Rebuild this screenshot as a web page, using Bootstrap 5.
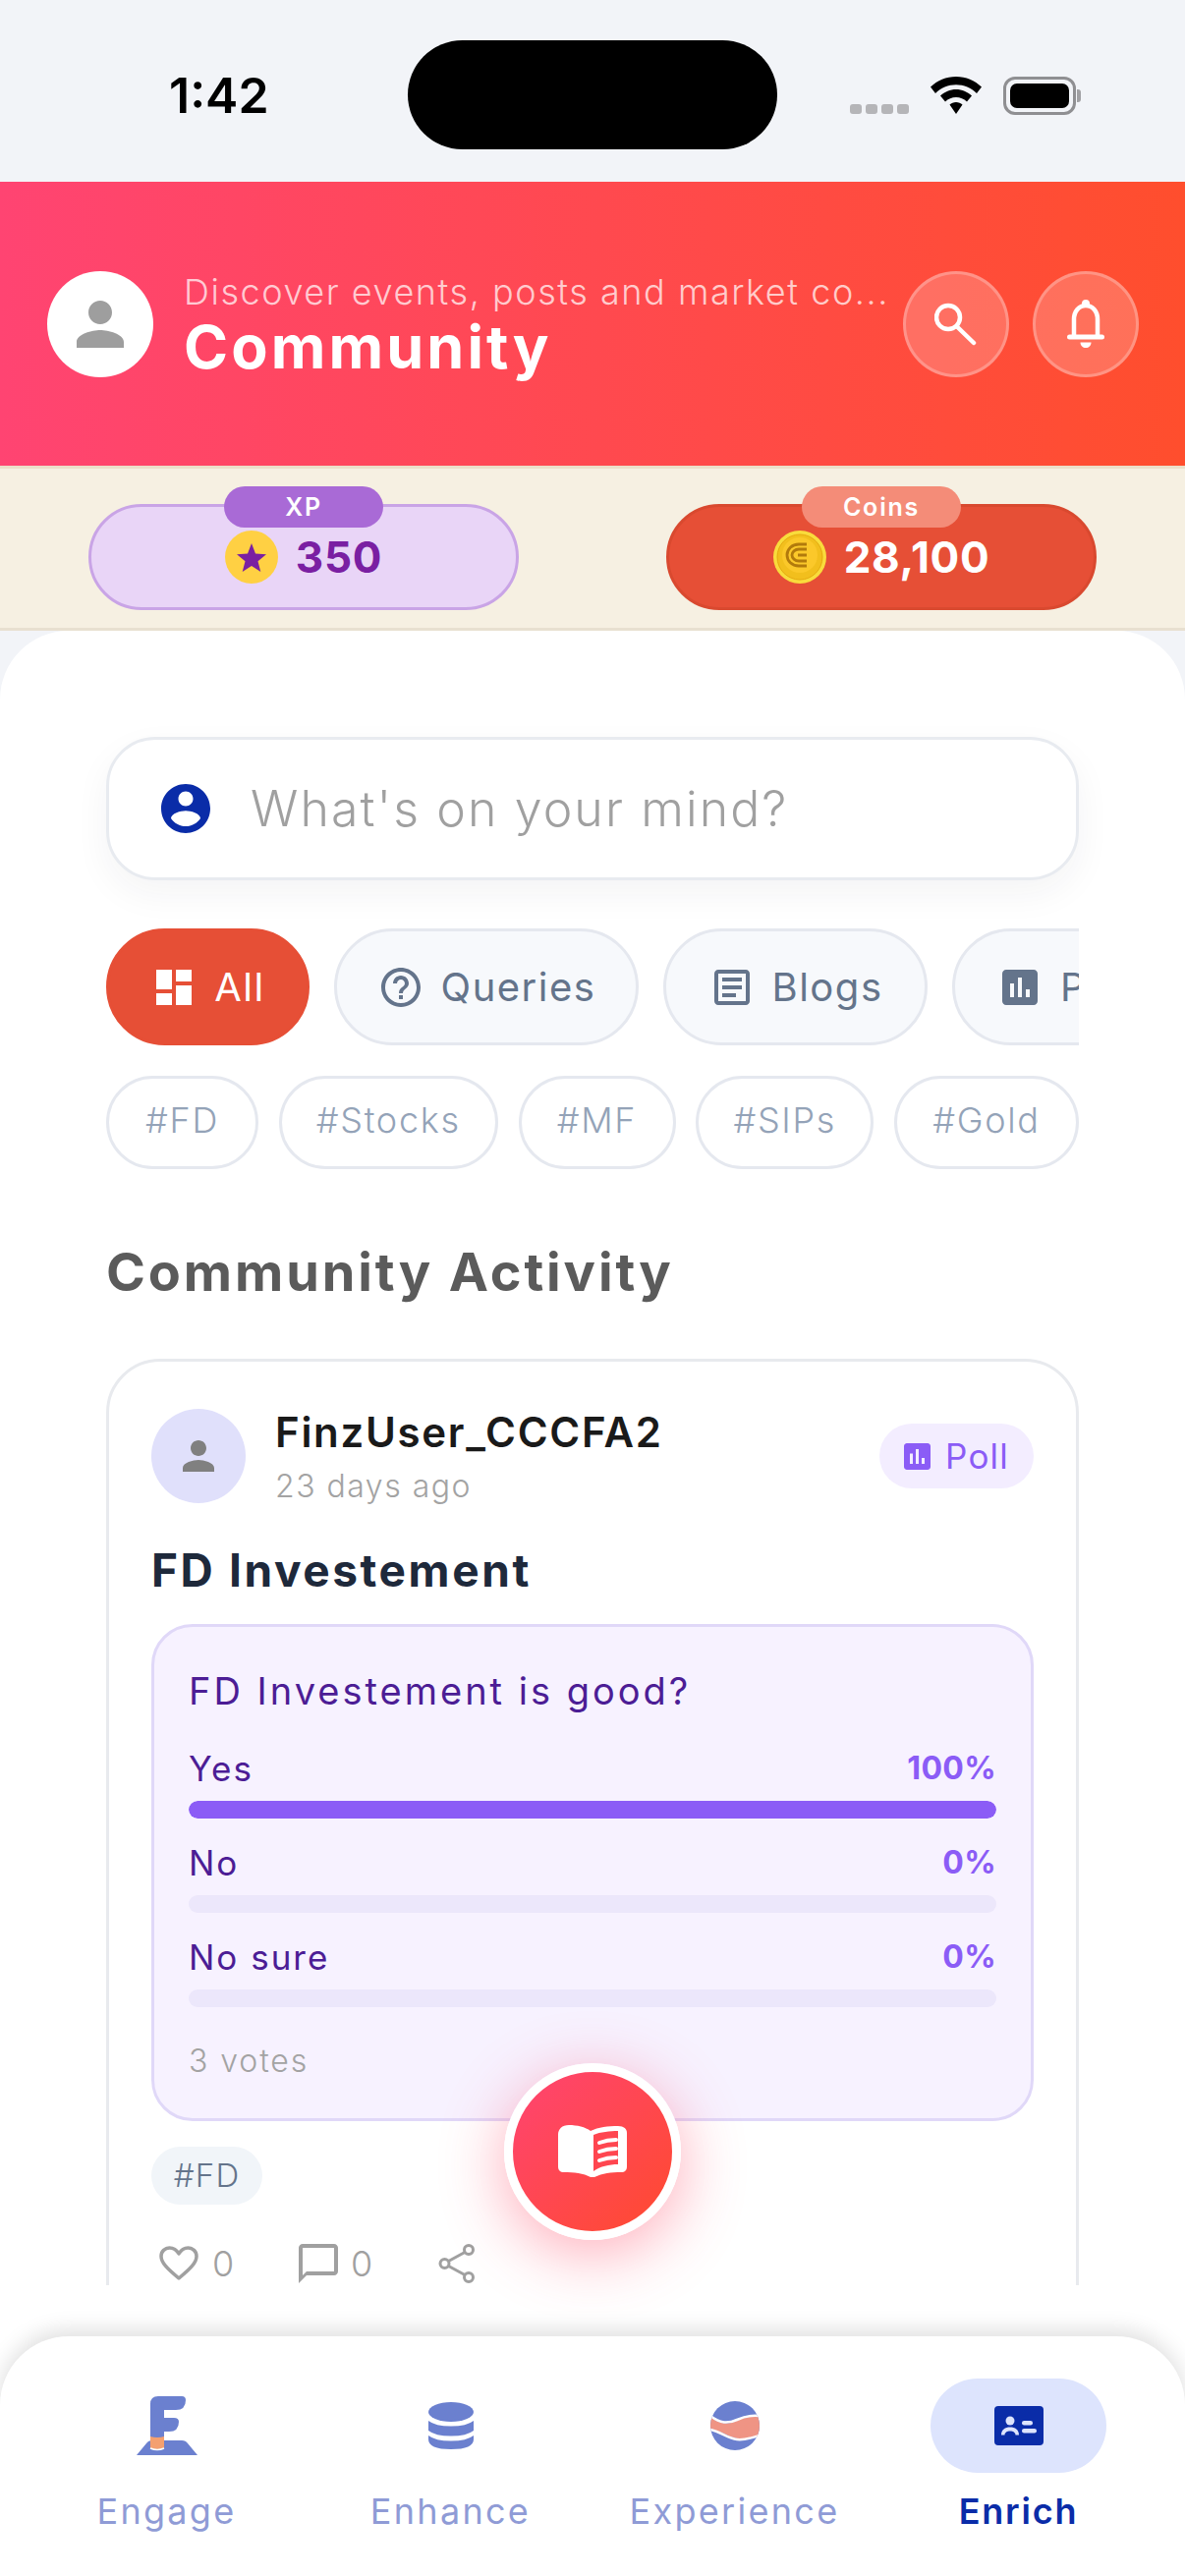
<!DOCTYPE html>
<html lang="en">
<head>
<meta charset="utf-8">
<title>Community</title>
<link href="https://cdn.jsdelivr.net/npm/bootstrap@5.3.0/dist/css/bootstrap.min.css" rel="stylesheet">
<style>
html,body{height:100%}
body{width:1206px;height:2622px;overflow:hidden;background:#f2f4f8;font-family:"Inter","Liberation Sans",sans-serif;position:relative;color:#1a1a1a}
.ph-status{height:185px;padding-top:9px;flex:none}
.ph-left{width:415px;padding-left:172px;font-size:50px;font-weight:600;letter-spacing:0;color:#000;line-height:1}
.ph-island{width:376px;height:111px;background:#000;border-radius:56px;margin-top:-1px}
.ph-right{margin-left:74px;gap:22px}
.ph-dots{gap:4px;margin-top:28px}
.ph-dots i{display:block;width:12px;height:10px;border-radius:3px;background:#b5b5b8}
.ph-batt{width:74px;height:39px;border:3px solid #8f8f92;border-radius:12px;padding:4px;position:relative}
.ph-batt i{display:block;height:100%;background:#000;border-radius:7px}
.ph-batt::after{content:"";position:absolute;right:-8px;top:10px;width:4px;height:13px;background:#a0a0a3;border-radius:0 3px 3px 0}
.hero{height:289px;padding:0 49px 0 48px;background:linear-gradient(90deg,#ff4472,#ff4e2d);flex:none}
.hero-av{width:108px;height:108px;background:#fff;flex:none}
.hero-txt{margin-left:31px;width:718px;flex:none;padding-top:4px}
.hero-sub{font-size:36px;line-height:44px;font-weight:300;color:rgba(255,255,255,.72);letter-spacing:1.55px;white-space:nowrap;margin-top:-2px}
.hero-title{font-size:61px;line-height:66px;font-weight:700;color:#fff;letter-spacing:3.1px;margin-top:1px}
.hero-btn{width:108px;height:108px;background:rgba(255,255,255,.2);border:3px solid rgba(255,255,255,.25);flex:none}
.hero-gap{margin-left:14px}
.hero-gap2{margin-left:24px}
.stats{height:168px;flex:none;background:#f6f0e2;border-top:3px solid #ecdfc9;border-bottom:3px solid #e8e0d0;padding:36px 90px 0}
.stat-pill{width:438px;height:108px;gap:18px}
.stat-xp{background:#e9d5f7;border:3px solid #c9a4e6}
.stat-coin{background:#e64f36;border:3px solid #d9492f}
.stat-lab{position:absolute;top:-21px;left:50%;transform:translateX(-50%);width:162px;height:42px;border-radius:21px;color:#fff;font-size:25px;font-weight:600;line-height:42px;text-align:center;letter-spacing:1.8px}
.lab-xp{background:#a96ad6}
.lab-coin{background:#f48c78}
.stat-num{font-size:44px;font-weight:700;line-height:54px;letter-spacing:.7px}
.num-xp{color:#7a1fa2}
.num-coin{color:#fff}
.sheet{flex:1;min-height:0;background:#fff;border-radius:70px 70px 0 0;overflow:hidden}
.feed{height:1684px;overflow:hidden;padding:108px 108px 0;flex:none}
.composer{height:146px;border:3px solid #e8ebf0;border-radius:50px;padding-left:48px;background:#fff;box-shadow:0 14px 36px rgba(30,41,59,.05);gap:36px}
.composer span{font-size:50px;font-weight:300;color:#a0a0a0;letter-spacing:2.1px}
.chips{margin-top:49px;gap:25px;overflow:hidden;height:119px}
.chip{height:119px;flex:none;border:3px solid #e5e8ef;background:#f7f9fc;color:#64748b;font-size:40px;gap:17px;letter-spacing:1.5px}
.chip-on{background:#e64f36;border-color:#e64f36;color:#fff}
.w-all{width:207px}.w-q{width:310px}.w-b{width:269px}.w-p{width:260px;padding-left:42px}
.tags{margin-top:31px}
.tag-pill{height:95px;border:3px solid #e5e8ef;color:#94a3b8;font-size:36px;font-weight:300;letter-spacing:1.7px;background:#fff;padding-bottom:5px}
.w-t1{width:155px}.w-t2{width:223px}.w-t3{width:160px}.w-t4{width:181px}.w-t5{width:188px}
.heading{margin:75px 0 58px;font-size:54px;line-height:60px;font-weight:700;color:#5b5b5b;letter-spacing:2.9px}
.post{border:3px solid #e8eaee;border-radius:55px;padding:48px 43px 120px 43px;background:#fff}
.post-av{width:96px;height:96px;background:#e0e0fb;flex:none}
.post-who{margin-left:30px}
.post-name{font-size:42px;line-height:48px;font-weight:600;color:#1a1a1a;letter-spacing:1.7px}
.post-time{font-size:32px;line-height:42px;margin-top:10px;color:#a3a3a3;font-weight:300;letter-spacing:1.5px}
.post-badge{width:157px;height:66px;margin-top:15px;background:#f3edff;color:#8b5cf6;font-size:35px;gap:15px;letter-spacing:1.2px}
.post-title{margin:36px 0 27px;font-size:46px;line-height:56px;font-weight:700;color:#1e293b;letter-spacing:2.6px}
.poll{border:3px solid #e0d8f8;background:#f7f2ff;border-radius:42px;padding:40px 35px 38px}
.poll-q{font-size:38px;line-height:50px;color:#4c1d95;letter-spacing:3px}
.poll-row{margin-top:25px;line-height:40px;font-size:35px;color:#4c1d95;letter-spacing:2px;font-weight:400}
.poll-row.first{margin-top:34px}
.poll-row b{color:#8b5cf6;font-weight:700;font-size:32px;letter-spacing:.3px}
.poll-bar{height:18px;margin-top:13px;background:#ece7fb;border-radius:9px}
.poll-bar .progress-bar{background:#8b5cf6;border-radius:9px}
.poll-votes{margin-top:35px;line-height:40px;font-size:32px;font-weight:300;color:#a3a3a3;letter-spacing:1.9px}
.post-tag{margin-top:26px;width:113px;height:59px;background:#f1f5f9;color:#64748b;font-size:33px;font-weight:300;letter-spacing:1.2px}
.acts{margin-top:40px;height:40px;color:#a0a0a0;font-size:36px;font-weight:300;line-height:36px}
.act1{width:141px;gap:14px}.act2{width:143px;gap:12px}
.fab{position:absolute;left:513px;top:2100px;width:180px;height:180px;border:9px solid #fff;background:linear-gradient(135deg,#ff4472,#ff4a2e);box-shadow:0 14px 64px rgba(255,60,90,.42)}
.botnav{height:244px;flex:none;background:#fff;border-radius:70px 70px 0 0;box-shadow:0 -6px 22px rgba(0,0,0,.13);padding:43px 25px 0;margin-top:52px}
.nav-col{width:289.25px}
.nav-slot{width:179px;height:96px}
.nav-on{background:#dde4fd}
.nav-lab{margin-top:17px;font-size:36px;line-height:44px;color:#8f9bd6;letter-spacing:2.3px}
.nav-lab.on{color:#0a2ca8;font-weight:600;letter-spacing:1.8px}
</style>
</head>
<body class="d-flex flex-column">
<div class="ph-status d-flex align-items-center">
  <div class="ph-left">1:42</div>
  <div class="ph-island"></div>
  <div class="ph-right d-flex align-items-center">
    <div class="ph-dots d-flex"><i></i><i></i><i></i><i></i></div>
    <svg width="52" height="38" viewBox="0 0 52 38" aria-hidden="true"><path d="M26 0C16 0 7 4 0 10.500L5 17C10.500 11.500 18 8.200 26 8.200S41.500 11.500 47 17L52 10.500C45 4 36 0 26 0Z"/><path d="M26 13C20 13 14.500 15.500 10 19.500L15 25.500C18 22.700 21.800 21 26 21S34 22.700 37 25.500L42 19.500C37.500 15.500 32 13 26 13Z"/><path d="M26 26C23.500 26 21.200 27 19.500 28.500L26 38L32.500 28.500C30.800 27 28.500 26 26 26Z"/></svg>
    <div class="ph-batt"><i></i></div>
  </div>
</div>

<header class="hero d-flex align-items-center">
  <div class="hero-av rounded-circle d-flex align-items-center justify-content-center">
    <svg width="72" height="72" viewBox="0 0 24 24" fill="#9e9e9e" aria-hidden="true"><path d="M12 12c2.210 0 4-1.790 4-4s-1.790-4-4-4-4 1.790-4 4 1.790 4 4 4zm0 2c-2.670 0-8 1.340-8 4v2h16v-2c0-2.660-5.330-4-8-4z"/></svg>
  </div>
  <div class="hero-txt">
    <div class="hero-sub">Discover events, posts and market co...</div>
    <div class="hero-title">Community</div>
  </div>
  <div class="hero-btn hero-gap rounded-circle d-flex align-items-center justify-content-center">
    <svg width="44" height="44" viewBox="0 0 44 44" fill="none" stroke="#fff" stroke-width="4.500" aria-hidden="true"><circle cx="14" cy="15" r="12"/><path d="M23.500 25L40 41" stroke-linecap="round"/></svg>
  </div>
  <div class="hero-btn hero-gap2 rounded-circle d-flex align-items-center justify-content-center">
    <svg width="40" height="52" viewBox="0 0 40 52" fill="none" aria-hidden="true"><path d="M8 38V21C8 13 13 7 20 7S32 13 32 21V38" stroke="#fff" stroke-width="4.500"/><path d="M3.500 39H36.500" stroke="#fff" stroke-width="5" stroke-linecap="round"/><circle cx="20" cy="5" r="4" fill="#fff"/><path d="M14.500 44.500H25.500C25.500 48 23 50 20 50S14.500 48 14.500 44.500Z" fill="#fff"/></svg>
  </div>
</header>

<section class="stats d-flex justify-content-between">
  <div class="stat-pill stat-xp rounded-pill position-relative d-flex align-items-center justify-content-center">
    <div class="stat-lab lab-xp">XP</div>
    <svg width="54" height="54" viewBox="0 0 54 54" aria-hidden="true"><circle cx="27" cy="27" r="27" fill="#ffd043"/><path d="M27 13L31 23.500L42 24.200L33.500 31.200L36.300 42L27 36L17.700 42L20.500 31.200L12 24.200L23 23.500Z" fill="#7a1fa2"/></svg>
    <span class="stat-num num-xp">350</span>
  </div>
  <div class="stat-pill stat-coin rounded-pill position-relative d-flex align-items-center justify-content-center">
    <div class="stat-lab lab-coin">Coins</div>
    <svg width="54" height="54" viewBox="0 0 54 54" fill="none" aria-hidden="true"><circle cx="27" cy="27" r="27" fill="#f9dc3c"/><circle cx="27" cy="27" r="23" fill="#f2bf1d" stroke="#e5a90f"/><circle cx="27" cy="25" r="18" fill="#fbc82a"/><path d="M34 14H26C19 14 14 19 14 25S19 36 26 36H34M34 19H26C22 19 19 22 19 25S22 31 26 31H34M34 25H25" stroke="#b27a0c" stroke-width="2.800"/></svg>
    <span class="stat-num num-coin">28,100</span>
  </div>
</section>

<main class="sheet d-flex flex-column">
  <div class="feed">
    <div class="composer d-flex align-items-center">
      <svg width="60" height="60" viewBox="0 0 24 24" fill="#0a2ca8" aria-hidden="true"><path d="M12 2C6.480 2 2 6.480 2 12s4.480 10 10 10 10-4.480 10-10S17.520 2 12 2zm0 3c1.660 0 3 1.340 3 3s-1.340 3-3 3-3-1.340-3-3 1.340-3 3-3zm0 14.200c-2.500 0-4.710-1.280-6-3.220.030-1.990 4-3.080 6-3.080 1.990 0 5.970 1.090 6 3.080-1.290 1.940-3.500 3.220-6 3.220z"/></svg>
      <span>What's on your mind?</span>
    </div>

    <div class="chips d-flex">
      <div class="chip chip-on w-all rounded-pill d-flex align-items-center justify-content-center">
        <svg width="48" height="48" viewBox="0 0 24 24" fill="#fff" aria-hidden="true"><path d="M3 13h8V3H3v10zm0 8h8v-6H3v6zm10 0h8V11h-8v10zm0-18v6h8V3h-8z"/></svg>All
      </div>
      <div class="chip w-q rounded-pill d-flex align-items-center justify-content-center">
        <svg width="48" height="48" viewBox="0 0 24 24" fill="#64748b" aria-hidden="true"><path d="M11 18h2v-2h-2v2zm1-16C6.480 2 2 6.480 2 12s4.480 10 10 10 10-4.480 10-10S17.520 2 12 2zm0 18c-4.410 0-8-3.590-8-8s3.590-8 8-8 8 3.590 8 8-3.590 8-8 8zm0-14c-2.210 0-4 1.790-4 4h2c0-1.100.9-2 2-2s2 .9 2 2c0 2-3 1.750-3 5h2c0-2.250 3-2.500 3-5 0-2.210-1.790-4-4-4z"/></svg>Queries
      </div>
      <div class="chip w-b rounded-pill d-flex align-items-center justify-content-center">
        <svg width="48" height="48" viewBox="0 0 24 24" fill="#64748b" aria-hidden="true"><path d="M19 5v14H5V5h14m0-2H5c-1.100 0-2 .9-2 2v14c0 1.100.9 2 2 2h14c1.100 0 2-.9 2-2V5c0-1.100-.9-2-2-2z"/><path d="M14 17H7v-2h7v2zm3-4H7v-2h10v2zm0-4H7V7h10v2z"/></svg>Blogs
      </div>
      <div class="chip w-p rounded-pill d-flex align-items-center">
        <svg width="48" height="48" viewBox="0 0 24 24" fill="#64748b" aria-hidden="true"><path d="M19 3H5c-1.100 0-2 .9-2 2v14c0 1.100.9 2 2 2h14c1.100 0 2-.9 2-2V5c0-1.100-.9-2-2-2zM9 17H7v-7h2v7zm4 0h-2V7h2v10zm4 0h-2v-4h2v4z"/></svg>Polls
      </div>
    </div>

    <div class="tags d-flex justify-content-between">
      <div class="tag-pill w-t1 rounded-pill d-flex align-items-center justify-content-center">#FD</div>
      <div class="tag-pill w-t2 rounded-pill d-flex align-items-center justify-content-center">#Stocks</div>
      <div class="tag-pill w-t3 rounded-pill d-flex align-items-center justify-content-center">#MF</div>
      <div class="tag-pill w-t4 rounded-pill d-flex align-items-center justify-content-center">#SIPs</div>
      <div class="tag-pill w-t5 rounded-pill d-flex align-items-center justify-content-center">#Gold</div>
    </div>

    <h2 class="heading">Community Activity</h2>

    <article class="post">
      <div class="d-flex align-items-start">
        <div class="post-av rounded-circle d-flex align-items-center justify-content-center">
          <svg width="48" height="48" viewBox="0 0 24 24" fill="#808080" aria-hidden="true"><path d="M12 12c2.210 0 4-1.790 4-4s-1.790-4-4-4-4 1.790-4 4 1.790 4 4 4zm0 2c-2.670 0-8 1.340-8 4v2h16v-2c0-2.660-5.330-4-8-4z"/></svg>
        </div>
        <div class="post-who flex-grow-1">
          <div class="post-name">FinzUser_CCCFA2</div>
          <div class="post-time">23 days ago</div>
        </div>
        <div class="post-badge rounded-pill d-flex align-items-center justify-content-center">
          <svg width="27" height="27" viewBox="3 3 18 18" fill="#8b5cf6" aria-hidden="true"><path d="M19 3H5c-1.100 0-2 .9-2 2v14c0 1.100.9 2 2 2h14c1.100 0 2-.9 2-2V5c0-1.100-.9-2-2-2zM9 17H7v-7h2v7zm4 0h-2V7h2v10zm4 0h-2v-4h2v4z"/></svg>Poll
        </div>
      </div>
      <h3 class="post-title">FD Investement</h3>
      <div class="poll">
        <div class="poll-q">FD Investement is good?</div>
        <div class="poll-row first d-flex justify-content-between"><span>Yes</span><b>100%</b></div>
        <div class="progress poll-bar"><div class="progress-bar w-100"></div></div>
        <div class="poll-row d-flex justify-content-between"><span>No</span><b>0%</b></div>
        <div class="progress poll-bar"><div class="progress-bar w-0"></div></div>
        <div class="poll-row d-flex justify-content-between"><span>No sure</span><b>0%</b></div>
        <div class="progress poll-bar"><div class="progress-bar w-0"></div></div>
        <div class="poll-votes">3 votes</div>
      </div>
      <div class="post-tag rounded-pill d-flex align-items-center justify-content-center">#FD</div>
      <div class="acts d-flex align-items-center ps-2">
        <div class="act1 d-flex align-items-center">
          <svg width="40" height="36" viewBox="0 0 40 36" fill="none" stroke="#a0a0a0" stroke-width="3.500" stroke-linejoin="round" aria-hidden="true"><path d="M20 33C8 23 2 17 2 10.500C2 5.500 6 2 10.500 2C14.500 2 18 4.500 20 8C22 4.500 25.500 2 29.500 2C34 2 38 5.500 38 10.500C38 17 32 23 20 33Z"/></svg>
          <span>0</span>
        </div>
        <div class="act2 d-flex align-items-center">
          <svg width="42" height="40" viewBox="2 2 20 20" fill="#a0a0a0" aria-hidden="true"><path d="M20 2H4c-1.100 0-2 .9-2 2v18l4-4h14c1.100 0 2-.9 2-2V4c0-1.100-.9-2-2-2zm0 14H6l-2 2V4h16v12z"/></svg>
          <span>0</span>
        </div>
        <svg width="38" height="40" viewBox="0 0 38 40" fill="none" stroke="#a0a0a0" stroke-width="3" aria-hidden="true"><circle cx="6.500" cy="20" r="4.500"/><circle cx="31" cy="6" r="4.500"/><circle cx="31" cy="34" r="4.500"/><path d="M10.500 17.500L27 8.500M10.500 22.500L27 31.500"/></svg>
      </div>
    </article>
  </div>

  <nav class="botnav d-flex">
    <div class="nav-col d-flex flex-column align-items-center">
      <div class="nav-slot d-flex align-items-center justify-content-center">
        <svg width="62" height="60" viewBox="0 0 62 60" aria-hidden="true"><path d="M0 60L10 48Q12 45 16 45H46Q50 45 52 48L62 60Z" fill="#6b80cf"/><path d="M14 40H28V53Q21 55 14 53Z" fill="#f4a070"/><path d="M14 53Q21 56 28 53" fill="none" stroke="#fff" stroke-width="1.500"/><path d="M14 41V8Q14 0 22 0H46Q50 0 50 4Q50 14 40 14H28V22H38Q43 22 43 26Q43 36 33 36H28V41Q21 43 14 41Z" fill="#6b80cf"/></svg>
      </div>
      <div class="nav-lab">Engage</div>
    </div>
    <div class="nav-col d-flex flex-column align-items-center">
      <div class="nav-slot d-flex align-items-center justify-content-center">
        <svg width="46" height="48" viewBox="0 0 46 48" fill="#6b80cf" aria-hidden="true"><ellipse cx="23" cy="10" rx="23" ry="10"/><path d="M0 19Q7 24.500 23 24.500T46 19V29Q39 34.500 23 34.500T0 29Z"/><path d="M0 34Q7 39.500 23 39.500T46 34V38Q46 48 23 48T0 38Z"/></svg>
      </div>
      <div class="nav-lab">Enhance</div>
    </div>
    <div class="nav-col d-flex flex-column align-items-center">
      <div class="nav-slot d-flex align-items-center justify-content-center">
        <svg width="50" height="50" viewBox="0 0 50 50" fill="none" aria-hidden="true"><defs><clipPath id="gl"><circle cx="25" cy="25" r="25"/></clipPath></defs><g clip-path="url(#gl)"><rect width="50" height="50" fill="#6b80cf"/><path d="M0 16C10 24 18 24 27 20S42 15 50 16V36C42 36 36 40 27 38S10 30 0 28Z" fill="#ef9484"/><path d="M0 15C10 23 18 23 27 19S42 14 50 15M0 29C10 31 18 38 27 39S42 37 50 35" stroke="#fff" stroke-width="2.500"/></g></svg>
      </div>
      <div class="nav-lab">Experience</div>
    </div>
    <div class="nav-col d-flex flex-column align-items-center">
      <div class="nav-slot nav-on rounded-pill d-flex align-items-center justify-content-center">
        <svg width="50" height="40" viewBox="0 0 50 40" aria-hidden="true"><rect width="50" height="40" rx="4" fill="#0a2ca8"/><circle cx="16" cy="15" r="4.500" fill="#dde4fd"/><path d="M7 29.500C7 24 11 21.500 16 21.500S25 24 25 29.500H21.500C21.500 27 19 25.500 16 25.500S10.500 27 10.500 29.500Z" fill="#dde4fd"/><rect x="28" y="15" width="11" height="4.500" rx="2.250" fill="#dde4fd"/><rect x="28" y="23" width="15" height="4.500" rx="2.250" fill="#dde4fd"/></svg>
      </div>
      <div class="nav-lab on">Enrich</div>
    </div>
  </nav>
</main>

<div class="fab rounded-circle d-flex align-items-center justify-content-center">
  <svg width="72" height="54" viewBox="0 0 72 54" aria-hidden="true"><path d="M12 0C20 0 29 2 34 6C42 2 52 1 62 1C68 1 71 4 71 8V42C71 46 69 48 65 48C55 48 46 49 38 53H34C27 49 17 48 7 48C3 48 1 46 1 42V10C1 4 5 0 12 0Z" fill="#fff"/><path d="M37 10C44 7 54 6 62 6V40C53 40 44 42 37 47Z" fill="#ff4650"/><path d="M43 18Q51 15 60 15M43 27Q51 24 60 24M43 36Q51 33 60 33" stroke="#fff" stroke-width="4" stroke-linecap="round" fill="none"/></svg>
</div>
<script src="https://cdn.jsdelivr.net/npm/bootstrap@5.3.0/dist/js/bootstrap.bundle.min.js"></script>
</body>
</html>
